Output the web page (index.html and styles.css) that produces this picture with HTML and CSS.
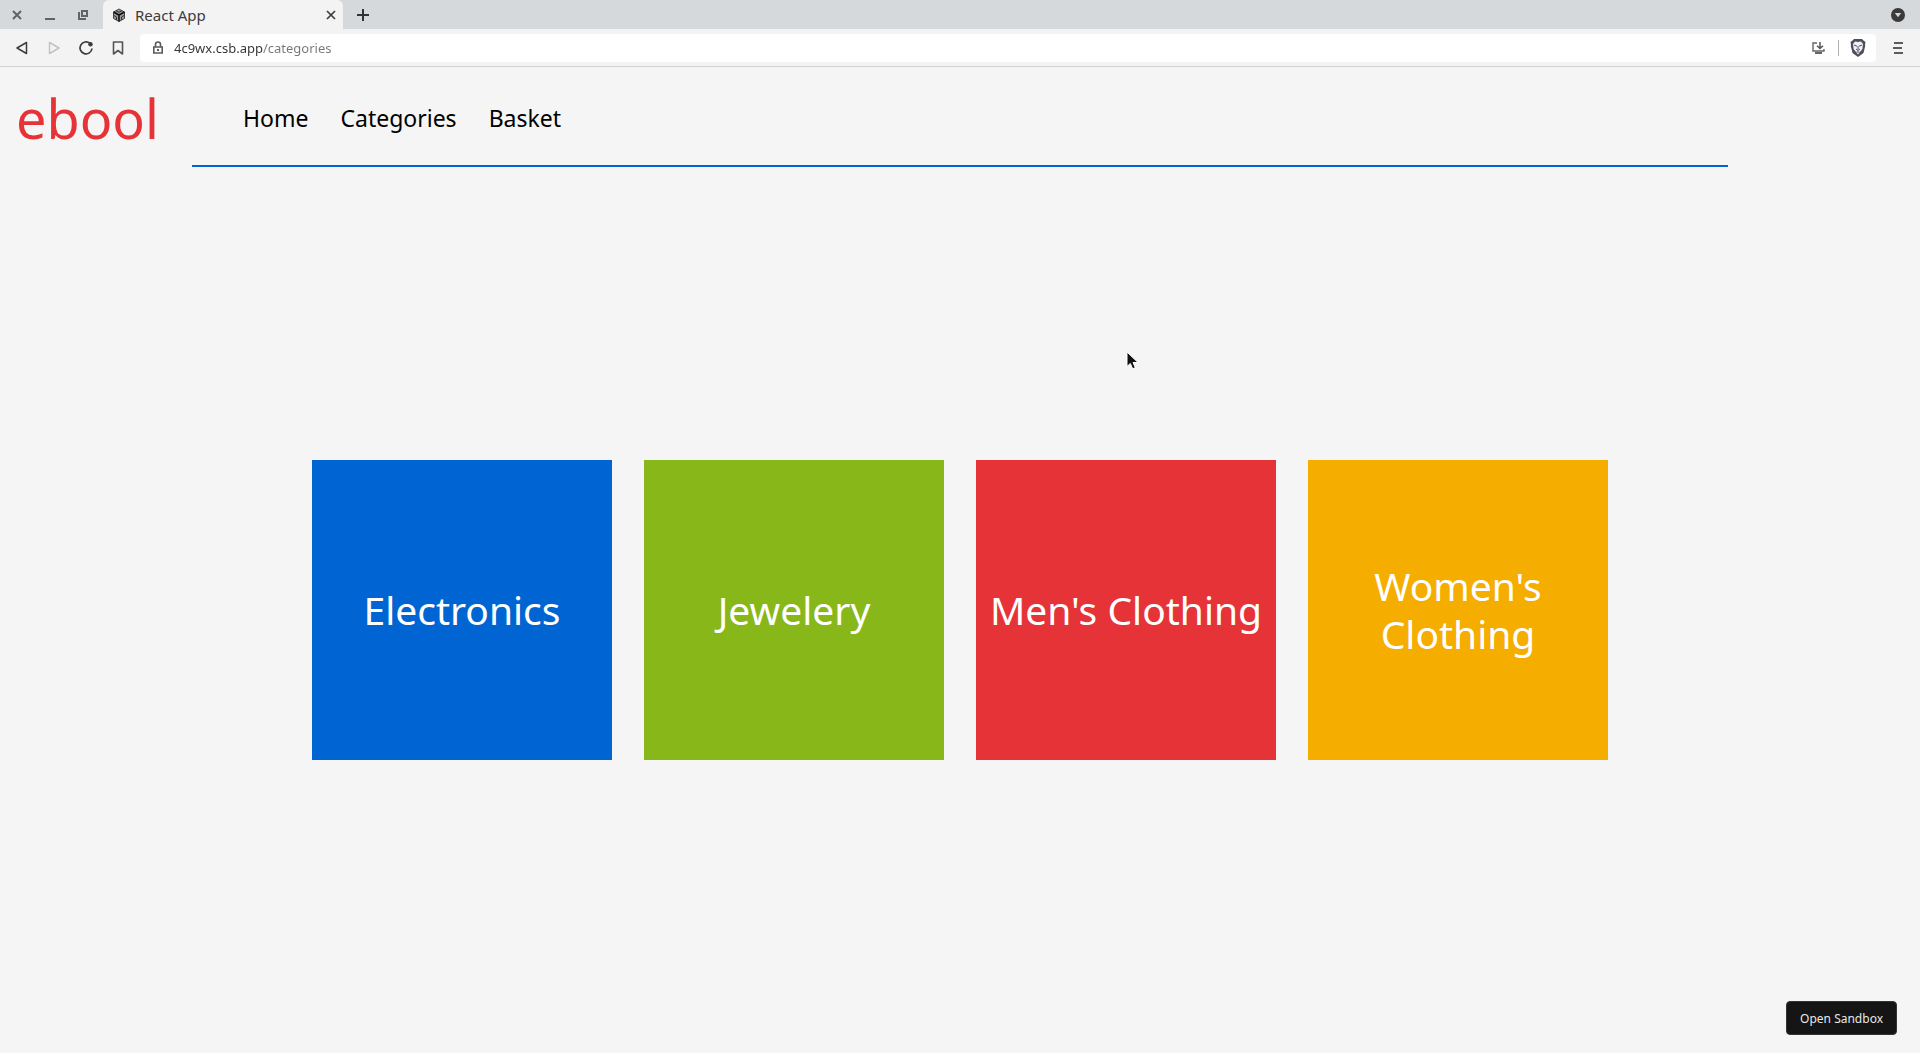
FILE: index.html
```html
<!DOCTYPE html>
<html lang="en">
<head>
<meta charset="utf-8">
<title>React App</title>
<link rel="stylesheet" href="styles.css">
</head>
<body>
<div class="tabstrip">
  <div class="window-controls">
    <button class="icon-btn" aria-label="Close window"><svg width="12" height="12" viewBox="0 0 12 12"><path d="M2 2l8 8M10 2l-8 8" stroke="#616467" stroke-width="2"/></svg></button>
    <button class="icon-btn" aria-label="Minimize window"><svg width="12" height="12" viewBox="0 0 12 12"><path d="M1 10h10" stroke="#616467" stroke-width="2"/></svg></button>
    <button class="icon-btn" aria-label="Restore window"><svg width="12" height="12" viewBox="0 0 12 12"><path d="M5 2h5v5H5zM2 3v7h7" fill="none" stroke="#616467" stroke-width="2"/></svg></button>
  </div>
  <div class="tab">
    <svg width="14" height="14" viewBox="0 0 14 14"><path d="M7 1l5.500 3v6.500L7 13.500 1.500 10.500V4z" fill="#9a9a9a" stroke="#444" stroke-width="1"/><path d="M1.500 4L7 7l5.500-3M7 7v6.500" fill="none" stroke="#111" stroke-width="1.600"/><path d="M4 2.700L7 4.300l3-1.600M2 7.500L4.500 9v3M12 7.500L9.500 9v3" fill="none" stroke="#333" stroke-width="1"/></svg>
    <span class="tab-title">React App</span>
    <button class="icon-btn" aria-label="Close tab"><svg width="12" height="12" viewBox="0 0 12 12"><path d="M2 2l8 8M10 2l-8 8" stroke="#3c3c3c" stroke-width="1.700"/></svg></button>
  </div>
  <button class="icon-btn new-tab" aria-label="New tab"><svg width="12" height="12" viewBox="0 0 12 12"><path d="M6 0v12M0 6h12" stroke="#333" stroke-width="2"/></svg></button>
  <button class="icon-btn tab-search" aria-label="Search tabs"><svg width="14" height="14" viewBox="0 0 14 14"><circle cx="7" cy="7" r="7" fill="#3a3a3a"/><path d="M3.800 5h6.400L7 9.200z" fill="#d5d9dc"/></svg></button>
</div>
<div class="toolbar">
  <div class="nav-buttons">
    <button class="icon-btn" aria-label="Back"><svg width="16" height="16" viewBox="0 0 16 16"><path d="M12.500 2.500v11L3 8z" fill="none" stroke="#3c3c3c" stroke-width="1.500" stroke-linejoin="round"/></svg></button>
    <button class="icon-btn" aria-label="Forward"><svg width="16" height="16" viewBox="0 0 16 16"><path d="M3.500 2.500v11L13 8z" fill="none" stroke="#c2c2c2" stroke-width="1.500" stroke-linejoin="round"/></svg></button>
    <button class="icon-btn" aria-label="Reload"><svg width="16" height="16" viewBox="0 0 16 16"><path d="M11.800 3.200A6 6 0 1 0 14 8.500" fill="none" stroke="#3c3c3c" stroke-width="1.700"/><circle cx="12.500" cy="4.200" r="2.200" fill="#3c3c3c"/></svg></button>
    <button class="icon-btn" aria-label="Bookmark"><svg width="16" height="16" viewBox="0 0 16 16"><path d="M3.500 2h9v12L8 10.500 3.500 14z" fill="none" stroke="#555" stroke-width="1.600" stroke-linejoin="round"/></svg></button>
  </div>
  <div class="address">
    <svg width="12" height="14" viewBox="0 0 12 14"><path d="M3.500 6V3.500a2.500 2.500 0 0 1 5 0V6M1.800 6h8.400v6H1.800z" fill="none" stroke="#5a5a5a" stroke-width="1.600"/><path d="M5 8h2v2H5z" fill="#5a5a5a"/></svg>
    <input class="url" type="text" aria-label="Address" value="4c9wx.csb.app/categories">
    <button class="icon-btn" aria-label="Install app"><svg width="14" height="14" viewBox="0 0 14 14"><path d="M6 2H2v8h11V8" fill="none" stroke="#666" stroke-width="1.400"/><path d="M4 11h7v2H4z" fill="#666"/><path d="M9 1v6M6 4.800L9 7.500l3-2.700" fill="none" stroke="#555" stroke-width="1.500"/></svg></button>
    <span class="divider"></span>
    <button class="icon-btn" aria-label="Brave Shields"><svg width="16" height="18" viewBox="0 0 16 18"><path d="M4 0h8l1.500 1.500L15.500 3l-.5 3 .2 1-1.700 7L8 18l-5.500-4L.8 7 1 6 .5 3l2-1.500z" fill="#4c4e5e"/><path d="M5 2.500L8 3l3-.5L13 5l-.6 5-2 2.500L8 15.500l-2.400-3-2-2.500L3 5z" fill="#eef0f4"/><path d="M4 6l3 1.200M12 6L9 7.200M8 7v3.500M6 10l2 1.500 2-1.500M6.500 13h3" fill="none" stroke="#4c4e5e" stroke-width="1"/></svg></button>
  </div>
  <button class="icon-btn menu" aria-label="Menu"><svg width="10" height="12" viewBox="0 0 10 12"><path d="M1 1h9M0 6h9M1 11h9" stroke="#5c5c5c" stroke-width="2"/></svg></button>
</div>
<header class="site-header">
  <a class="logo" href="#">ebool</a>
  <nav class="site-nav">
    <a href="#">Home</a>
    <a href="#">Categories</a>
    <a href="#">Basket</a>
  </nav>
</header>
<main class="categories">
  <a class="card blue" href="#">Electronics</a>
  <a class="card green" href="#">Jewelery</a>
  <a class="card red" href="#">Men's Clothing</a>
  <a class="card yellow" href="#">Women's Clothing</a>
</main>
<button class="sandbox">Open Sandbox</button>
<svg class="cursor" width="14" height="20" viewBox="0 0 14 20"><path d="M1 1v14.500l3.300-3 2.400 5.300 2.600-1.200L7 11.500h5z" fill="#111" stroke="#fff" stroke-width="1"/></svg>
</body>
</html>
```
FILE: styles.css
```css
* {
  box-sizing: border-box;
}

body {
  margin: 0;
  min-height: 100vh;
  display: flex;
  flex-direction: column;
  background: #f5f5f5;
  color: #000;
  font-family: "Noto Sans", sans-serif;
}

a {
  color: inherit;
  text-decoration: none;
}

svg {
  display: block;
  flex: none;
}

.icon-btn {
  padding: 0;
  border: 0;
  background: none;
}

/* Browser frame */
.tabstrip {
  display: flex;
  align-items: center;
  height: 29px;
  background: #d5d9dc;
}

.window-controls {
  display: flex;
  gap: 21px;
  padding: 0 14px 0 11px;
}

.tab {
  display: flex;
  align-items: center;
  gap: 9px;
  width: 240px;
  height: 29px;
  padding: 0 6px 0 9px;
  background: #f3f3f3;
  border-radius: 6px 6px 0 0;
}

.tab-title {
  flex: 1;
  font-size: 15px;
  color: #3c3c3c;
}

.new-tab {
  margin-left: 14px;
}

.tab-search {
  margin: 0 15px 0 auto;
}

.toolbar {
  display: flex;
  align-items: center;
  height: 38px;
  background: #f3f3f3;
  border-bottom: 1px solid #d2d2d2;
}

.nav-buttons {
  display: flex;
  gap: 16px;
  padding: 0 14px;
}

.address {
  flex: 1;
  display: flex;
  align-items: center;
  height: 28px;
  padding: 0 10px 0 12px;
  background: #fff;
  border-radius: 4px;
}

.url {
  flex: 1;
  min-width: 0;
  margin-left: 10px;
  padding: 0;
  border: 0;
  font: 13px "Noto Sans", sans-serif;
  color: transparent;
  background: linear-gradient(90deg, #333 89px, #777 89px);
  background-clip: text;
  -webkit-background-clip: text;
}

.divider {
  width: 1px;
  height: 16px;
  margin: 0 11px 0 13px;
  background: #b0b0b0;
}

.menu {
  margin: 0 17px;
}

/* Site */
.site-header {
  display: grid;
  grid-template-columns: 10% 80%;
  height: 100px;
}

.logo {
  padding: 3px 0 0 16px;
  font-size: 54px;
  line-height: 96px;
  color: #e63338;
}

.site-nav {
  display: flex;
  align-items: center;
  gap: 32px;
  padding: 3px 0 0 51px;
  border-bottom: 2px solid #0065d3;
  font-size: 23px;
}

.categories {
  flex: 1;
  display: flex;
  flex-wrap: wrap;
  justify-content: center;
  align-content: center;
  gap: 32px;
}

.card {
  display: flex;
  align-items: center;
  justify-content: center;
  width: 300px;
  aspect-ratio: 1;
  color: #fff;
  font-size: 39px;
  line-height: 48px;
  text-align: center;
}

.blue {
  background: #0065d3;
}

.green {
  background: #88b719;
}

.red {
  background: #e63338;
}

.yellow {
  background: #f5ad00;
}

.sandbox {
  position: fixed;
  right: 23px;
  bottom: 18px;
  height: 34px;
  padding: 0 13px;
  border: 1px solid #343434;
  border-radius: 4px;
  background: #151515;
  color: #e8e8e8;
  font: 12px "Noto Sans", sans-serif;
}

.cursor {
  position: absolute;
  left: 1126px;
  top: 351px;
}
```
